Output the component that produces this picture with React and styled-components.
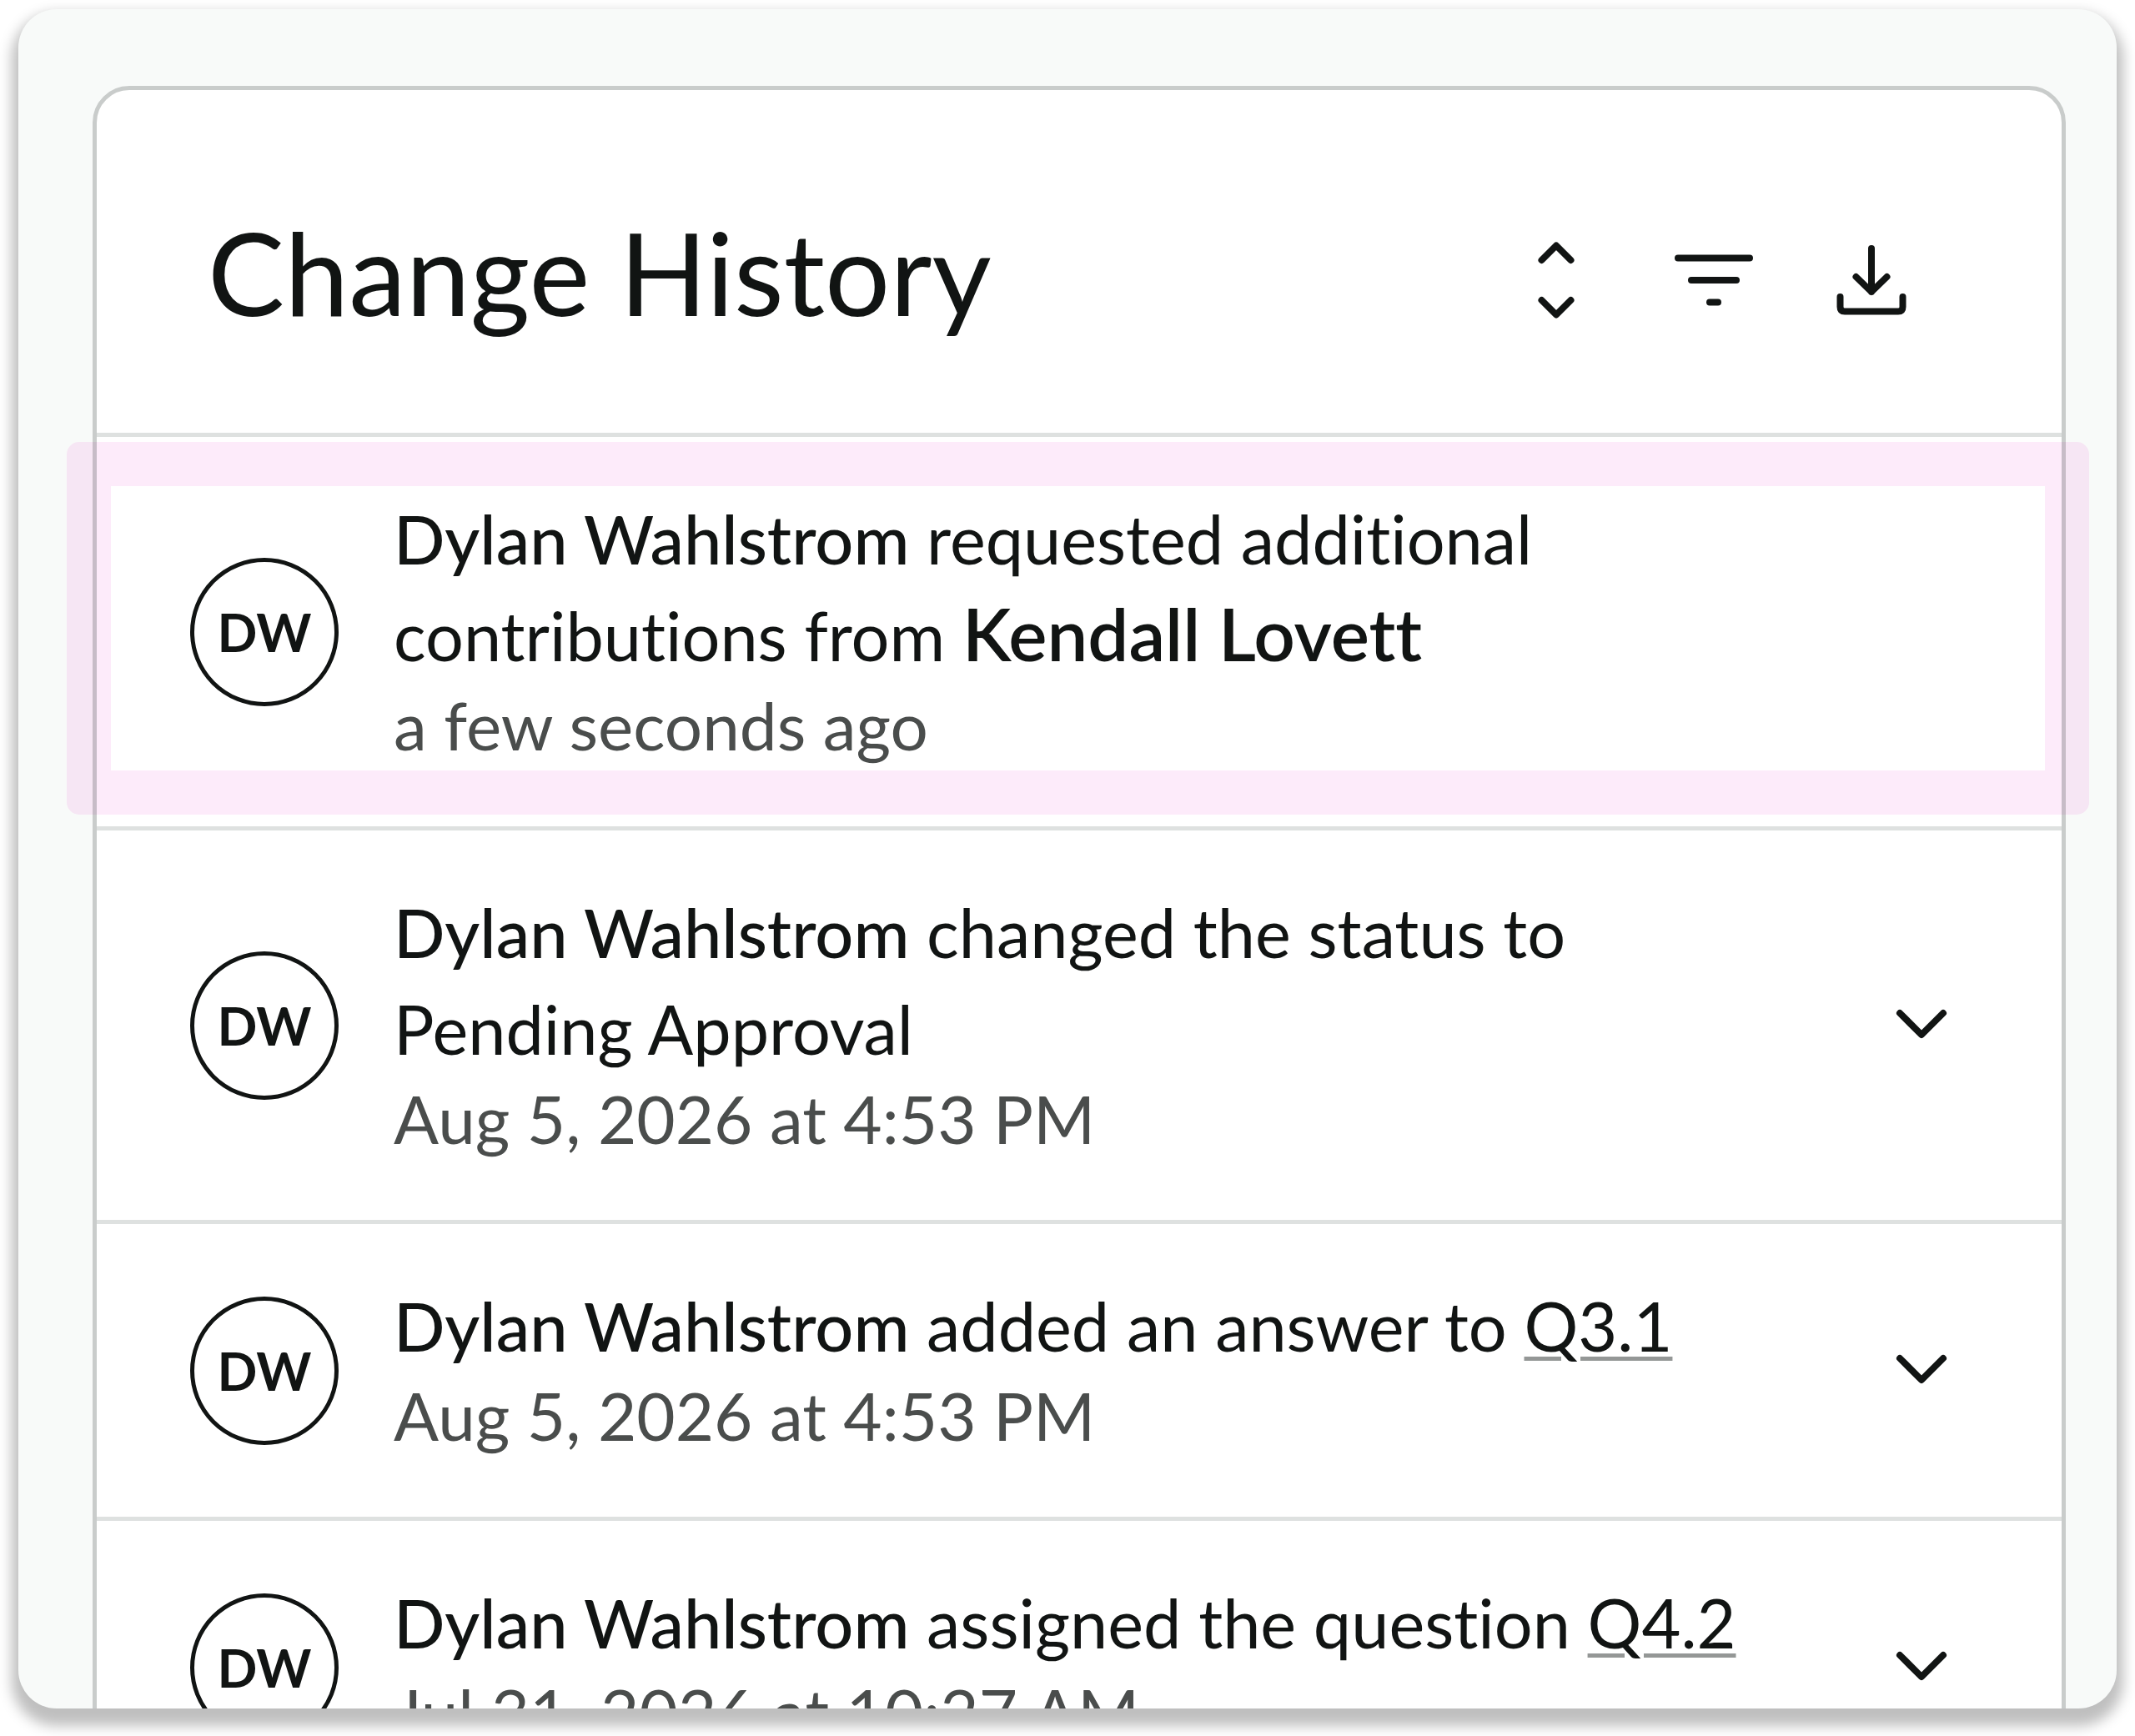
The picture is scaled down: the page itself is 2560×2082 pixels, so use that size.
import React from "react";
import styled, { createGlobalStyle } from "styled-components";

const GlobalStyle = createGlobalStyle`
  *, *::before, *::after { box-sizing: border-box; }
  body {
    margin: 0;
    background: #ffffff;
    color: #111413;
    font-family: Lato, "Open Sans", sans-serif;
    font-variant-ligatures: none;
  }
`;

const Stage = styled.div`
  height: 100vh;
  padding: 11px 22px 33px;
  overflow: hidden;
`;

const Frame = styled.main`
  height: 100%;
  padding: 92px 61px 0 89px;
  overflow: hidden;
  border-radius: 46px;
  background: #f8faf9;
  box-shadow: 0 13px 16px 8px #bfbfbf;
`;

const Panel = styled.section`
  border: 5px solid #c9cccb;
  border-radius: 44px;
  background: #ffffff;
`;

const Header = styled.header`
  display: flex;
  align-items: center;
  justify-content: space-between;
  height: 416px;
  padding: 44px 172px 0 133px;
  border-bottom: 5px solid #dee1e0;
`;

const Title = styled.h1`
  margin: 0;
  padding-bottom: 20px;
  font-size: 138px;
  font-weight: 400;
  line-height: 160px;
`;

const Toolbar = styled.div`
  display: flex;
  gap: 77px;
`;

const IconButton = styled.button`
  flex: none;
  width: 112px;
  height: 112px;
  padding: 0;
  border: 0;
  background: transparent;
  color: inherit;
  cursor: pointer;
`;

const Icon = styled.svg`
  display: block;
  width: 100%;
  height: 100%;
  fill: none;
  stroke: currentColor;
  stroke-width: 8;
  stroke-linecap: round;
  stroke-linejoin: round;
`;

const List = styled.ul`
  margin: 0;
  padding: 0;
  list-style: none;
`;

const Entry = styled.li`
  position: relative;
  display: flex;
  align-items: center;
  gap: 66px;
  padding: 64px 112px;
  border-bottom: 5px solid #dee1e0;
`;

const Highlight = styled.div`
  position: absolute;
  inset: 6px -33px 14px -36px;
  border: 53px solid #fdebfa;
  border-radius: 15px;
  mix-blend-mode: multiply;
  pointer-events: none;
`;

const Avatar = styled.div`
  display: flex;
  flex: none;
  align-items: center;
  justify-content: center;
  width: 178px;
  height: 178px;
  border: 5px solid #111413;
  border-radius: 50%;
  font-size: 63px;
  font-weight: 700;
`;

const Body = styled.div`
  flex: 1;
  min-width: 0;
  padding-bottom: 8px;
`;

const Message = styled.p`
  margin: 0;
  font-size: 81px;
  line-height: 116px;
`;

const Name = styled.strong`
  font-size: ${(props) => (props.$large ? "87px" : "inherit")};
  font-weight: ${(props) => (props.$large ? 600 : 500)};
  line-height: 1;
`;

const QuestionLink = styled.a`
  color: inherit;
  text-decoration: underline;
  text-decoration-color: #949796;
  text-decoration-thickness: 5px;
  text-underline-offset: 6px;
`;

const Time = styled.time`
  display: block;
  color: #4a4d4c;
  font-size: 80px;
  line-height: 99px;
`;

const author = "Dylan Wahlstrom";

const entries = [
  {
    id: 1,
    time: "a few seconds ago",
    highlighted: true,
    text: (
      <>
        requested additional
        <br />
        contributions from <Name $large>Kendall Lovett</Name>
      </>
    ),
  },
  {
    id: 2,
    time: "Aug 5, 2026 at 4:53 PM",
    expandable: true,
    text: (
      <>
        changed the status to
        <br />
        Pending Approval
      </>
    ),
  },
  {
    id: 3,
    time: "Aug 5, 2026 at 4:53 PM",
    expandable: true,
    text: (
      <>
        added an answer to <QuestionLink href="#q3-1">Q3.1</QuestionLink>
      </>
    ),
  },
  {
    id: 4,
    time: "Jul 31, 2026 at 10:27 AM",
    expandable: true,
    text: (
      <>
        assigned the question <QuestionLink href="#q4-2">Q4.2</QuestionLink>
      </>
    ),
  },
];

function SortIcon() {
  return (
    <Icon viewBox="-56 -56 112 112" aria-hidden="true">
      <path d="M-17.5-24 0-41.5 17.5-24M-17.5 24 0 41.5 17.5 24" />
    </Icon>
  );
}

function FilterIcon() {
  return (
    <Icon viewBox="-56 -56 112 112" aria-hidden="true">
      <path d="M-43-26.5H43M-27 0H27M-5 26.5H5" />
    </Icon>
  );
}

function DownloadIcon() {
  return (
    <Icon viewBox="-56 -56 112 112" aria-hidden="true">
      <path d="M0-38V14M-18.5-4 0 14 18.5-4M-37.5 20V32Q-37.5 37.5-32 37.5H32Q37.5 37.5 37.5 32V20" />
    </Icon>
  );
}

function ChevronIcon() {
  return (
    <Icon viewBox="-56 -56 112 112" aria-hidden="true">
      <path d="M-26-15 0 11 26-15" />
    </Icon>
  );
}

export default function App() {
  return (
    <>
      <GlobalStyle />
      <Stage>
        <Frame>
          <Panel>
            <Header>
              <Title>Change History</Title>
              <Toolbar>
                <IconButton type="button" aria-label="Sort">
                  <SortIcon />
                </IconButton>
                <IconButton type="button" aria-label="Filter">
                  <FilterIcon />
                </IconButton>
                <IconButton type="button" aria-label="Download">
                  <DownloadIcon />
                </IconButton>
              </Toolbar>
            </Header>
            <List>
              {entries.map((entry) => (
                <Entry key={entry.id}>
                  <Avatar>DW</Avatar>
                  <Body>
                    <Message>
                      <Name>{author}</Name> {entry.text}
                    </Message>
                    <Time>{entry.time}</Time>
                  </Body>
                  {entry.expandable && (
                    <IconButton type="button" aria-label="Show details">
                      <ChevronIcon />
                    </IconButton>
                  )}
                  {entry.highlighted && <Highlight />}
                </Entry>
              ))}
            </List>
          </Panel>
        </Frame>
      </Stage>
    </>
  );
}
